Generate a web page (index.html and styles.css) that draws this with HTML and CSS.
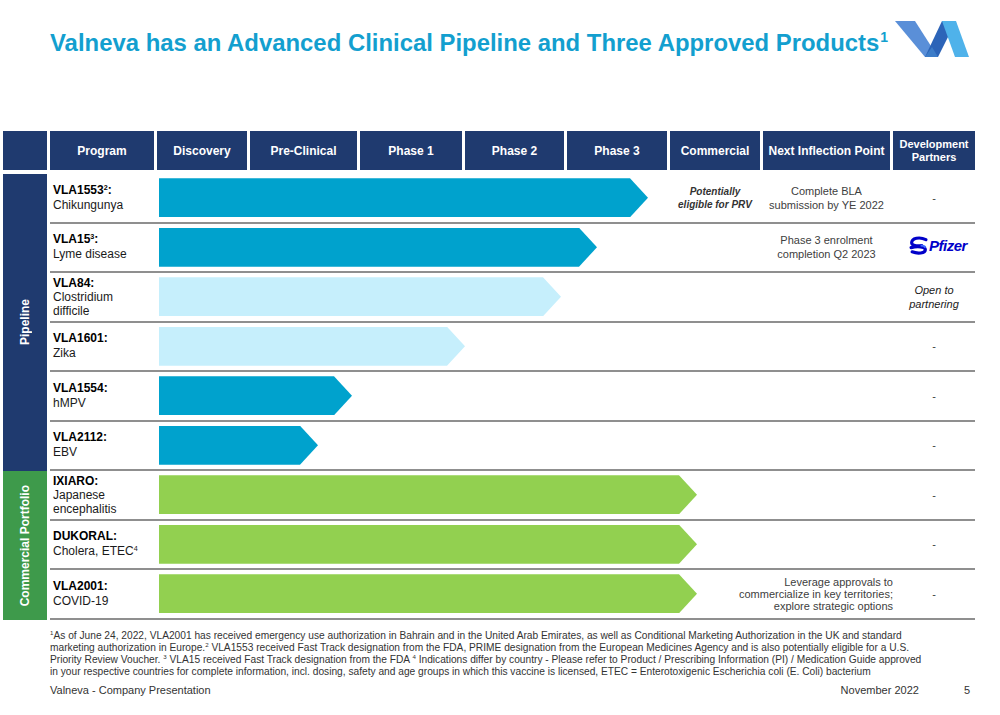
FILE: index.html
```html
<!DOCTYPE html>
<html>
<head>
<meta charset="utf-8">
<link rel="stylesheet" href="styles.css">
</head>
<body>
<div class="slide">
  <div class="top">
    <h1 class="title">Valneva has an Advanced Clinical Pipeline and Three Approved Products<sup>1</sup></h1>
    <svg class="logo" viewBox="0 0 76 40" width="76" height="40">
      <polygon points="1,2 21,2 44,38 31,38" fill="#5a8fd8"/>
      <polygon points="31,38 44,38 62,2 48,2" fill="#2c64b8"/>
      <polygon points="48,2 62,2 75,38 61,38" fill="#4fb2ea"/>
      <polygon points="31,38 44,38 38,28" fill="#3c7cc8"/>
    </svg>
  </div>

  <div class="table">
    <div class="thead">
      <div class="th"></div>
      <div class="th">Program</div>
      <div class="th">Discovery</div>
      <div class="th">Pre-Clinical</div>
      <div class="th">Phase 1</div>
      <div class="th">Phase 2</div>
      <div class="th">Phase 3</div>
      <div class="th">Commercial</div>
      <div class="th">Next Inflection Point</div>
      <div class="th th-small">Development Partners</div>
    </div>

    <div class="tbody">
      <div class="side">
        <div class="side-block side-pipe"><span>Pipeline</span></div>
        <div class="side-block side-com"><span>Commercial Portfolio</span></div>
      </div>
      <div class="rows">
        <div class="row">
          <div class="prog"><b>VLA1553<sup>2</sup>:</b><br>Chikungunya</div>
          <div class="bar bar-blue" style="width:489px"></div>
          <div class="comm">Potentially<br>eligible for PRV</div>
          <div class="infl">Complete BLA<br>submission by YE 2022</div>
          <div class="partner">-</div>
        </div>
        <div class="row">
          <div class="prog"><b>VLA15<sup>3</sup>:</b><br>Lyme disease</div>
          <div class="bar bar-blue" style="width:438px"></div>
          <div class="infl">Phase 3 enrolment<br>completion Q2 2023</div>
          <div class="partner">
            <span class="pfizer">
              <svg class="pfizer-icon" viewBox="0 0 18 18" width="19" height="19">
                <path d="M16 3.5 C10 0.5 2.5 2 2.5 6.5 C2.5 9.5 8 9.5 12 9" fill="none" stroke="#0000c9" stroke-width="3" stroke-linecap="round"/>
                <path d="M2 11 C8 9.5 15.5 10 15.5 13 C15.5 16.5 8 17 3 15" fill="none" stroke="#0000c9" stroke-width="3" stroke-linecap="round"/>
                <path d="M11 9 C13 9 15 9.5 15.5 11" fill="none" stroke="#3d6bff" stroke-width="2"/>
              </svg><span class="pfizer-text">Pfizer</span>
            </span>
          </div>
        </div>
        <div class="row">
          <div class="prog prog-3"><b>VLA84:</b><br>Clostridium<br>difficile</div>
          <div class="bar bar-light" style="width:402px"></div>
          <div class="partner partner-italic">Open to<br>partnering</div>
        </div>
        <div class="row">
          <div class="prog"><b>VLA1601:</b><br>Zika</div>
          <div class="bar bar-light" style="width:306px"></div>
          <div class="partner">-</div>
        </div>
        <div class="row">
          <div class="prog"><b>VLA1554:</b><br>hMPV</div>
          <div class="bar bar-blue" style="width:193px"></div>
          <div class="partner">-</div>
        </div>
        <div class="row">
          <div class="prog"><b>VLA2112:</b><br>EBV</div>
          <div class="bar bar-blue" style="width:159px"></div>
          <div class="partner">-</div>
        </div>
        <div class="row">
          <div class="prog prog-3"><b>IXIARO:</b><br>Japanese<br>encephalitis</div>
          <div class="bar bar-green" style="width:538px"></div>
          <div class="partner">-</div>
        </div>
        <div class="row">
          <div class="prog"><b>DUKORAL:</b><br>Cholera, ETEC<sup>4</sup></div>
          <div class="bar bar-green" style="width:538px"></div>
          <div class="partner">-</div>
        </div>
        <div class="row">
          <div class="prog"><b>VLA2001:</b><br>COVID-19</div>
          <div class="bar bar-green" style="width:538px"></div>
          <div class="infl infl-wide">Leverage approvals to<br>commercialize in key territories;<br>explore strategic options</div>
          <div class="partner">-</div>
        </div>
      </div>
    </div>
  </div>

  <div class="notes">
    <div><sup>1</sup>As of June 24, 2022, VLA2001 has received emergency use authorization in Bahrain and in the United Arab Emirates, as well as Conditional Marketing Authorization in the UK and standard</div>
    <div>marketing authorization in Europe.<sup>2</sup> VLA1553 received Fast Track designation from the FDA, PRIME designation from the European Medicines Agency and is also potentially eligible for a U.S.</div>
    <div>Priority Review Voucher. <sup>3</sup> VLA15 received Fast Track designation from the FDA <sup>4</sup> Indications differ by country - Please refer to Product / Prescribing Information (PI) / Medication Guide approved</div>
    <div>in your respective countries for complete information, incl. dosing, safety and age groups in which this vaccine is licensed, ETEC = Enterotoxigenic Escherichia coli (E. Coli) bacterium</div>
  </div>

  <div class="footer">
    <span class="foot-left">Valneva - Company Presentation</span>
    <span class="foot-date">November 2022</span>
    <span class="foot-page">5</span>
  </div>
</div>
</body>
</html>
```

FILE: styles.css
```css
html, body {
  margin: 0;
  padding: 0;
  background: #ffffff;
}

.slide {
  width: 1000px;
  height: 715px;
  position: relative;
  font-family: "Liberation Sans", Arial, sans-serif;
  color: #1a1a1a;
  overflow: hidden;
}

.top {
  display: flex;
  align-items: flex-start;
  height: 131px;
  padding: 0 30px 0 50px;
  box-sizing: border-box;
}

.title {
  margin: 29px 0 0 0;
  font-size: 23.9px;
  line-height: 28px;
  font-weight: bold;
  color: #139fcf;
  white-space: nowrap;
}

.title sup {
  font-size: 14px;
  vertical-align: 9px;
  line-height: 0;
  margin-left: 1px;
}

.logo {
  margin-left: auto;
  margin-top: 19px;
  display: block;
}

.table {
  padding-left: 3px;
}

.thead {
  display: grid;
  grid-template-columns: 44px 104px 90px 107px 102px 99px 100px 90px 127px 82px;
  column-gap: 3px;
  height: 39px;
}

.th {
  background: #1f3a6f;
  color: #ffffff;
  font-weight: bold;
  font-size: 12px;
  display: flex;
  align-items: center;
  justify-content: center;
  text-align: center;
  white-space: nowrap;
}

.th-small {
  font-size: 11px;
  line-height: 13px;
  white-space: normal;
}

.tbody {
  display: flex;
  margin-top: 4px;
  column-gap: 3px;
}

.side {
  width: 44px;
  display: flex;
  flex-direction: column;
}

.side-block {
  display: flex;
  align-items: center;
  justify-content: center;
  color: #ffffff;
  font-weight: bold;
  font-size: 12px;
}

.side-block span {
  writing-mode: vertical-rl;
  transform: rotate(180deg);
  white-space: nowrap;
}

.side-pipe {
  background: #1f3a6f;
  height: 297px;
}

.side-com {
  background: #3e9a4b;
  height: 149px;
}

.rows {
  width: 925px;
}

.row {
  display: grid;
  grid-template-columns: 104px 90px 107px 102px 99px 100px 90px 127px 82px;
  column-gap: 3px;
  height: 49.5px;
  box-sizing: border-box;
  border-bottom: 2px solid #8f8f8f;
  align-items: center;
}

.prog {
  grid-column: 1;
  grid-row: 1;
  padding-left: 3px;
  font-size: 12px;
  line-height: 15px;
  color: #1a1a1a;
}

.prog-3 {
  line-height: 14px;
}

.prog b {
  color: #000000;
}

.prog sup, .notes sup {
  font-size: 0.6em;
  line-height: 0;
  vertical-align: 0.6em;
}

.bar {
  grid-column: 2 / 8;
  grid-row: 1;
  justify-self: start;
  margin-left: 2px;
  height: 39px;
  clip-path: polygon(0 0, calc(100% - 18px) 0, 100% 50%, calc(100% - 18px) 100%, 0 100%);
}

.bar-blue { background: #00a2cd; }
.bar-light { background: #c6effc; }
.bar-green { background: #92d050; }

.comm {
  grid-column: 7;
  grid-row: 1;
  text-align: center;
  font-size: 10px;
  line-height: 13px;
  font-weight: bold;
  font-style: italic;
  color: #333333;
}

.infl {
  grid-column: 8;
  grid-row: 1;
  text-align: center;
  font-size: 11px;
  line-height: 14px;
  color: #404040;
  white-space: nowrap;
}

.infl-wide {
  grid-column: 7 / 9;
  text-align: right;
  line-height: 12px;
  margin-right: -3px;
}

.partner {
  grid-column: 9;
  grid-row: 1;
  text-align: center;
  font-size: 11px;
  line-height: 14px;
  color: #404040;
}

.partner-italic {
  font-style: italic;
  color: #1a1a1a;
}

.pfizer {
  display: inline-flex;
  align-items: center;
  margin-left: 8px;
}

.pfizer-icon {
  display: block;
  margin-right: 1px;
}

.pfizer-text {
  font-size: 15px;
  font-weight: bold;
  font-style: italic;
  color: #0000c9;
  letter-spacing: -0.5px;
}

.notes {
  margin: 10px 0 0 50px;
  font-family: "Liberation Sans", Arial, sans-serif;
  font-size: 10.2px;
  line-height: 12px;
  color: #333333;
  white-space: nowrap;
}

.footer {
  display: flex;
  align-items: baseline;
  margin-top: 6px;
  padding-left: 50px;
  font-size: 11px;
  color: #333333;
}

.foot-date {
  margin-left: auto;
}

.foot-page {
  margin-left: 45px;
  margin-right: 30px;
}
```
